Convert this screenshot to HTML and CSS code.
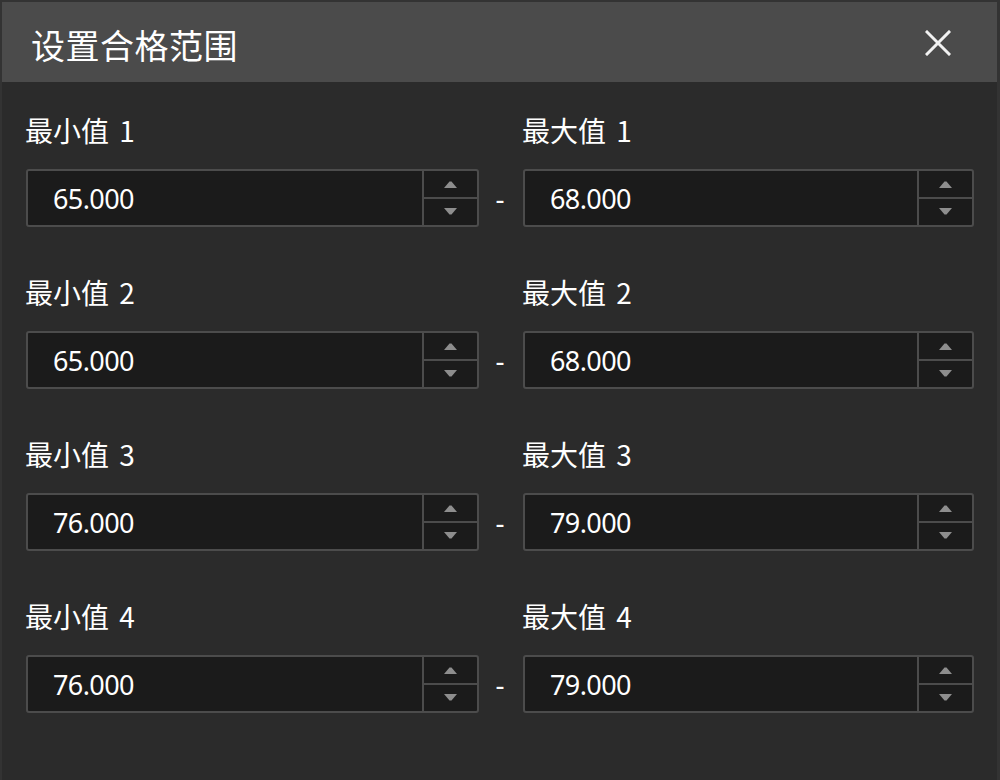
FILE: index.html
```html
<!DOCTYPE html>
<html lang="zh-CN">
<head>
    <meta charset="UTF-8">
    <title>设置合格范围</title>
    <link rel="stylesheet" href="styles.css">
</head>
<body>
    <div class="dialog">
        <div class="titlebar">
            <h1>设置合格范围</h1>
            <button class="close" aria-label="关闭">
                <svg width="26" height="26" viewBox="0 0 26 26" fill="none" stroke="#f2f2f2" stroke-width="3" stroke-linecap="square">
                    <path d="M2 2L24 24M24 2L2 24"/>
                </svg>
            </button>
        </div>

        <div class="ranges">
            <div class="range">
                <div class="field">
                    <label>最小值 1</label>
                    <div class="spinbox">
                        <input type="text" value="65.000">
                        <div class="spin-btns">
                            <span class="btn"><svg width="13" height="8" viewBox="0 0 13 8"><polygon points="0,8 13,8 7.5,1.5 5.5,1.5"/></svg></span>
                            <span class="btn"><svg width="13" height="8" viewBox="0 0 13 8"><polygon points="0,0 13,0 7.5,6.5 5.5,6.5"/></svg></span>
                        </div>
                    </div>
                </div>
                <span class="dash">-</span>
                <div class="field">
                    <label>最大值 1</label>
                    <div class="spinbox">
                        <input type="text" value="68.000">
                        <div class="spin-btns">
                            <span class="btn"><svg width="13" height="8" viewBox="0 0 13 8"><polygon points="0,8 13,8 7.5,1.5 5.5,1.5"/></svg></span>
                            <span class="btn"><svg width="13" height="8" viewBox="0 0 13 8"><polygon points="0,0 13,0 7.5,6.5 5.5,6.5"/></svg></span>
                        </div>
                    </div>
                </div>
            </div>

            <div class="range">
                <div class="field">
                    <label>最小值 2</label>
                    <div class="spinbox">
                        <input type="text" value="65.000">
                        <div class="spin-btns">
                            <span class="btn"><svg width="13" height="8" viewBox="0 0 13 8"><polygon points="0,8 13,8 7.5,1.5 5.5,1.5"/></svg></span>
                            <span class="btn"><svg width="13" height="8" viewBox="0 0 13 8"><polygon points="0,0 13,0 7.5,6.5 5.5,6.5"/></svg></span>
                        </div>
                    </div>
                </div>
                <span class="dash">-</span>
                <div class="field">
                    <label>最大值 2</label>
                    <div class="spinbox">
                        <input type="text" value="68.000">
                        <div class="spin-btns">
                            <span class="btn"><svg width="13" height="8" viewBox="0 0 13 8"><polygon points="0,8 13,8 7.5,1.5 5.5,1.5"/></svg></span>
                            <span class="btn"><svg width="13" height="8" viewBox="0 0 13 8"><polygon points="0,0 13,0 7.5,6.5 5.5,6.5"/></svg></span>
                        </div>
                    </div>
                </div>
            </div>

            <div class="range">
                <div class="field">
                    <label>最小值 3</label>
                    <div class="spinbox">
                        <input type="text" value="76.000">
                        <div class="spin-btns">
                            <span class="btn"><svg width="13" height="8" viewBox="0 0 13 8"><polygon points="0,8 13,8 7.5,1.5 5.5,1.5"/></svg></span>
                            <span class="btn"><svg width="13" height="8" viewBox="0 0 13 8"><polygon points="0,0 13,0 7.5,6.5 5.5,6.5"/></svg></span>
                        </div>
                    </div>
                </div>
                <span class="dash">-</span>
                <div class="field">
                    <label>最大值 3</label>
                    <div class="spinbox">
                        <input type="text" value="79.000">
                        <div class="spin-btns">
                            <span class="btn"><svg width="13" height="8" viewBox="0 0 13 8"><polygon points="0,8 13,8 7.5,1.5 5.5,1.5"/></svg></span>
                            <span class="btn"><svg width="13" height="8" viewBox="0 0 13 8"><polygon points="0,0 13,0 7.5,6.5 5.5,6.5"/></svg></span>
                        </div>
                    </div>
                </div>
            </div>

            <div class="range">
                <div class="field">
                    <label>最小值 4</label>
                    <div class="spinbox">
                        <input type="text" value="76.000">
                        <div class="spin-btns">
                            <span class="btn"><svg width="13" height="8" viewBox="0 0 13 8"><polygon points="0,8 13,8 7.5,1.5 5.5,1.5"/></svg></span>
                            <span class="btn"><svg width="13" height="8" viewBox="0 0 13 8"><polygon points="0,0 13,0 7.5,6.5 5.5,6.5"/></svg></span>
                        </div>
                    </div>
                </div>
                <span class="dash">-</span>
                <div class="field">
                    <label>最大值 4</label>
                    <div class="spinbox">
                        <input type="text" value="79.000">
                        <div class="spin-btns">
                            <span class="btn"><svg width="13" height="8" viewBox="0 0 13 8"><polygon points="0,8 13,8 7.5,1.5 5.5,1.5"/></svg></span>
                            <span class="btn"><svg width="13" height="8" viewBox="0 0 13 8"><polygon points="0,0 13,0 7.5,6.5 5.5,6.5"/></svg></span>
                        </div>
                    </div>
                </div>
            </div>
        </div>
    </div>
</body>
</html>
```

FILE: styles.css
```css
:root {
    --title-bg: #4b4b4b;
    --body-bg: #2b2b2b;
    --field-bg: #1b1b1b;
    --field-border: #4c4c4c;
    --arrow: #8e8e8e;
    --text: #ffffff;
}

* {
    margin: 0;
    padding: 0;
    box-sizing: border-box;
}

body {
    background: #333333;
    height: 780px;
    overflow: hidden;
    font-family: "Noto Sans", "Noto Sans CJK SC", sans-serif;
    color: var(--text);
}

.dialog {
    margin: 2px 3px 0 2px;
    height: 778px;
    background: var(--body-bg);
}

.titlebar {
    height: 80px;
    background: var(--title-bg);
    display: flex;
    align-items: center;
    justify-content: space-between;
    padding: 0 46px 0 29px;
}

.titlebar h1 {
    font-family: "Noto Sans CJK SC", sans-serif;
    font-size: 34px;
    font-weight: 400;
    letter-spacing: 0.5px;
    line-height: 1;
    padding-top: 6px;
}

.close {
    background: none;
    border: none;
    width: 26px;
    height: 26px;
    display: flex;
    cursor: pointer;
    margin-top: 2px;
}

.ranges {
    padding: 30px 0 0 24px;
    display: flex;
    flex-direction: column;
    gap: 47px;
}

.range {
    display: grid;
    grid-template-columns: 453px 44px 451px;
}

.field {
    display: flex;
    flex-direction: column;
    gap: 21px;
}

.field label {
    font-family: "Noto Sans CJK SC", sans-serif;
    font-size: 28px;
    line-height: 36px;
    word-spacing: 4px;
    margin-left: -1px;
}

.spinbox {
    height: 58px;
    display: flex;
    background: var(--field-bg);
    border: 2px solid var(--field-border);
    border-radius: 3px;
}

.spinbox input {
    flex: 1;
    min-width: 0;
    background: transparent;
    border: none;
    outline: none;
    color: var(--text);
    font-family: "Noto Sans", sans-serif;
    font-size: 27px;
    letter-spacing: -0.6px;
    padding-left: 25px;
    padding-top: 1px;
}

.spin-btns {
    width: 55px;
    display: flex;
    flex-direction: column;
    border-left: 2px solid var(--field-border);
}

.spin-btns .btn {
    flex: 1;
    display: flex;
    align-items: center;
    justify-content: center;
    fill: var(--arrow);
}

.spin-btns .btn + .btn {
    border-top: 2px solid var(--field-border);
}

.dash {
    align-self: end;
    height: 58px;
    display: flex;
    align-items: center;
    justify-content: center;
    font-size: 28px;
    padding-right: 2px;
}
```
